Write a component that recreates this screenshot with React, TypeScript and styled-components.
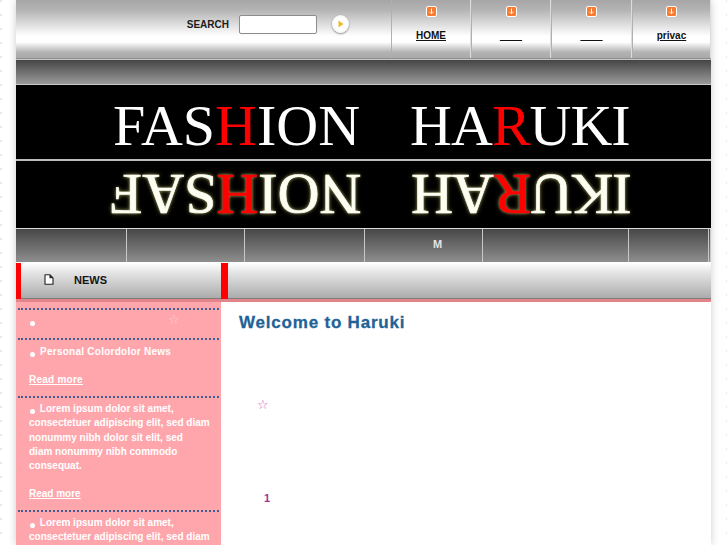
import React from 'react';
import styled, { createGlobalStyle } from 'styled-components';

const GlobalStyle = createGlobalStyle`
  html, body {
    margin: 0;
    height: 545px;
    overflow: hidden;
    background-color: #fff;
    background-image: radial-gradient(circle at 1px 1px, #e2e2e2 0.6px, transparent 1px);
    background-size: 726px 14px;
    font-family: "Liberation Sans", Arial, sans-serif;
  }
`;

const Page = styled.div`
  width: 695px;
  margin-left: 16px;
  height: 545px;
  overflow: hidden;
  box-shadow: 0 0 8px rgba(0, 0, 0, 0.2);
  background: #fff;
`;

const TopBar = styled.header`
  display: flex;
  height: 58px;
  background: linear-gradient(#a6a6a6 0, #b4b4b4 10px, #e8e8e8 28px, #fff 36px, #fff 42px, #b4b4b4 52px, #a8a8a8 58px);
  border-bottom: 1px solid #8f8f8f;
`;

const SearchForm = styled.form`
  flex: 1;
  display: flex;
  align-items: center;
  padding: 0 42px 10px 0;
  justify-content: flex-end;
`;

const SearchLabel = styled.label`
  font-size: 10px;
  font-weight: bold;
  color: #1c1c1c;
  margin-right: 10px;
`;

const SearchInput = styled.input`
  width: 76px;
  height: 17px;
  padding: 0;
  border: 1px solid #8c8c8c;
  border-radius: 2px;
  background: #fff;
  margin-right: 15px;
`;

const SearchButton = styled.button`
  width: 17px;
  height: 18px;
  padding: 0;
  border: 0;
  border-radius: 50%;
  background: radial-gradient(circle, #fff 50%, #e4e4e4 100%);
  box-shadow: 0 1px 2px rgba(0, 0, 0, 0.45);
  display: flex;
  align-items: center;
  justify-content: center;
`;

const TopLink = styled.a<{ $w: number }>`
  width: ${(p) => p.$w}px;
  box-sizing: border-box;
  border-left: 1px solid #b0b0b0;
  border-right: 1px solid #ddd;
  display: flex;
  flex-direction: column;
  align-items: center;
  padding-top: 6px;
  gap: 12px;
  font-size: 10px;
  font-weight: bold;
  color: #111;
`;

const TopLabel = styled.span`
  text-decoration: underline;
  line-height: 13px;
  height: 13px;
  white-space: pre;
`;

const Strap = styled.div`
  height: 24px;
  border-top: 1px solid #c8c8c8;
  border-bottom: 1px solid #c9c9c9;
  background: linear-gradient(#454545, #9a9a9a);
`;

const Banner = styled.div`
  height: 74px;
  background: #000;
  display: flex;
  align-items: center;
  padding-left: 97px;
  gap: 50px;
  overflow: hidden;
`;

const Reflection = styled(Banner)`
  height: 67px;
  border-top: 2px solid #bdbdbd;
  border-bottom: 1px solid #ddd;
  padding-left: 94px;
  gap: 51px;
`;

const Word = styled.span<{ $ls: number }>`
  font-family: "Liberation Serif", "Times New Roman", serif;
  font-size: 58px;
  line-height: 58px;
  letter-spacing: ${(p) => p.$ls}px;
  color: #fff;
  white-space: nowrap;
  position: relative;
  top: 4px;
`;

const MirrorWord = styled(Word)`
  color: #fdfdf2;
  -webkit-text-stroke: 0.7px #fdfdf2;
  transform: rotate(180deg);
  text-shadow: 0 0 3px #a8a86c, 0 0 5px #6a6a3c;
  top: -1px;
`;

const Red = styled.span`
  color: #f00;
  -webkit-text-stroke-color: #f00;
`;

const MainNav = styled.nav`
  display: flex;
  height: 33px;
  background: linear-gradient(#474747, #8e8e8e);
`;

const NavCell = styled.a<{ $w: number; $pad: number }>`
  width: ${(p) => p.$w}px;
  box-sizing: border-box;
  border-right: 1px solid #c8c8c8;
  display: flex;
  align-items: center;
  justify-content: center;
  padding: 0 0 3px ${(p) => p.$pad}px;
  font-size: 11px;
  font-weight: bold;
  color: #e4e4e4;
`;

const TabRow = styled.div`
  display: flex;
  height: 37px;
  border-bottom: 3px solid #e1858b;
`;

const Tab = styled.div<{ $grow?: boolean; $w?: number }>`
  ${(p) => (p.$grow ? 'flex: 1;' : `width: ${p.$w}px;`)}
  box-sizing: border-box;
  display: flex;
  align-items: center;
  gap: 20px;
  padding-left: 23px;
  padding-bottom: 3px;
  margin-top: 1px;
  border-left: ${(p) => (p.$grow ? 7 : 5)}px solid #f00;
  background: linear-gradient(#fff, #e6e6e6 25%, #a9a9a9 100%);
  box-shadow: inset 0 -1px 0 #7d7d7d;
`;

const TabTitle = styled.span`
  font-size: 11px;
  font-weight: bold;
  color: #151515;
`;

const Columns = styled.div`
  display: grid;
  grid-template-columns: 205px 1fr;
`;

const Sidebar = styled.aside`
  background: #ffa6ac;
  padding: 6px 2px 0;
  height: 260px;
`;

const NewsItem = styled.div<{ $h: number; $pt?: number; $ls?: number }>`
  height: ${(p) => p.$h}px;
  border-top: 2px dotted #3d5f92;
  padding: ${(p) => p.$pt ?? 4}px 0 0 11px;
  font-size: 10px;
  font-weight: bold;
  line-height: 14.3px;
  letter-spacing: ${(p) => p.$ls ?? 0}px;
  color: #fff;
  box-sizing: border-box;
  position: relative;
`;

const Bullet = styled.i`
  display: inline-block;
  width: 5px;
  height: 5px;
  border-radius: 50%;
  background: #fff;
  margin: 0 2px 0 1px;
  vertical-align: -2px;
`;

const ReadMore = styled.a`
  display: block;
  margin-top: 14px;
  color: #fff;
  text-decoration: underline;
`;

const PaleStar = styled.span`
  position: absolute;
  left: 150px;
  top: 3px;
  font-family: "DejaVu Sans", sans-serif;
  font-size: 13px;
  font-weight: normal;
  color: #ffd4da;
`;

const Content = styled.main`
  padding: 11px 0 0 18px;
  display: flex;
  flex-direction: column;
  align-items: flex-start;
`;

const Title = styled.h1`
  margin: 0;
  font-size: 17px;
  line-height: 20px;
  font-weight: bold;
  letter-spacing: 0.8px;
  -webkit-text-stroke: 0.3px #1f6396;
  color: #1f6396;
`;

const Star = styled.span`
  margin: 65px 0 0 18px;
  font-family: "DejaVu Sans", sans-serif;
  font-size: 13px;
  line-height: 14px;
  color: #c65fb0;
`;

const Count = styled.span`
  margin: 79px 0 0 25px;
  font-size: 11px;
  line-height: 14px;
  font-weight: bold;
  color: #a5309a;
`;

const DownIcon = () => (
  <svg width="11" height="11" viewBox="0 0 11 11">
    <rect x="0.5" y="0.5" width="10" height="10" rx="1.5" fill="#fb7a2c" stroke="#fff" />
    <path d="M5.5 2.5v5M3.5 5.8l2 2 2-2" fill="none" stroke="#fff" strokeWidth="1" />
  </svg>
);

const PageIcon = () => (
  <svg width="10" height="11" viewBox="0 0 10 11">
    <path d="M1 .8h5l3 3v6.4H1z M6 .8v3h3" fill="#fff" stroke="#222" strokeWidth="1.1" strokeLinejoin="round" />
  </svg>
);

const topLinks = [
  { label: 'HOME', w: 80 },
  { label: '        ', w: 80 },
  { label: '        ', w: 81 },
  { label: 'privac', w: 79 },
];

const navCells = [
  { label: '', w: 111, pad: 0 },
  { label: '', w: 118, pad: 0 },
  { label: '', w: 120, pad: 0 },
  { label: 'M', w: 118, pad: 28 },
  { label: '', w: 146, pad: 0 },
  { label: '', w: 80, pad: 0 },
  { label: '', w: 2, pad: 0 },
];

export default function App() {
  return (
    <>
      <GlobalStyle />
      <Page>
        <TopBar>
          <SearchForm>
            <SearchLabel>SEARCH</SearchLabel>
            <SearchInput />
            <SearchButton type="button">
              <svg width="6" height="8" viewBox="0 0 6 8">
                <path d="M0.5 0.5L5.5 4L0.5 7.5z" fill="#f3b62f" />
              </svg>
            </SearchButton>
          </SearchForm>
          {topLinks.map((l, i) => (
            <TopLink key={i} $w={l.w}>
              <DownIcon />
              <TopLabel>{l.label}</TopLabel>
            </TopLink>
          ))}
        </TopBar>
        <Strap />
        <Banner>
          <Word $ls={0}>FAS<Red>H</Red>ION</Word>
          <Word $ls={-1}>HA<Red>R</Red>UKI</Word>
        </Banner>
        <Reflection>
          <MirrorWord $ls={0}>NOI<Red>H</Red>SAF</MirrorWord>
          <MirrorWord $ls={-1}>IKU<Red>R</Red>AH</MirrorWord>
        </Reflection>
        <MainNav>
          {navCells.map((c, i) => (
            <NavCell key={i} $w={c.w} $pad={c.pad}>{c.label}</NavCell>
          ))}
        </MainNav>
        <TabRow>
          <Tab $w={205}>
            <PageIcon />
            <TabTitle>NEWS</TabTitle>
          </Tab>
          <Tab $grow />
        </TabRow>
        <Columns>
          <Sidebar>
            <NewsItem $h={30}>
              <Bullet />
              <PaleStar>☆</PaleStar>
            </NewsItem>
            <NewsItem $h={58} $pt={5} $ls={0.25}>
              <Bullet />
              {' '}Personal Colordolor News
              <ReadMore>Read more</ReadMore>
            </NewsItem>
            <NewsItem $h={114}>
              <Bullet />
              {' '}Lorem ipsum dolor sit amet,<br />
              consectetuer adipiscing elit, sed diam<br />
              nonummy nibh dolor sit elit, sed<br />
              diam nonummy nibh commodo<br />
              consequat.
              <ReadMore>Read more</ReadMore>
            </NewsItem>
            <NewsItem $h={114}>
              <Bullet />
              {' '}Lorem ipsum dolor sit amet,<br />
              consectetuer adipiscing elit, sed diam
            </NewsItem>
          </Sidebar>
          <Content>
            <Title>Welcome to Haruki</Title>
            <Star>☆</Star>
            <Count>1</Count>
          </Content>
        </Columns>
      </Page>
    </>
  );
}
